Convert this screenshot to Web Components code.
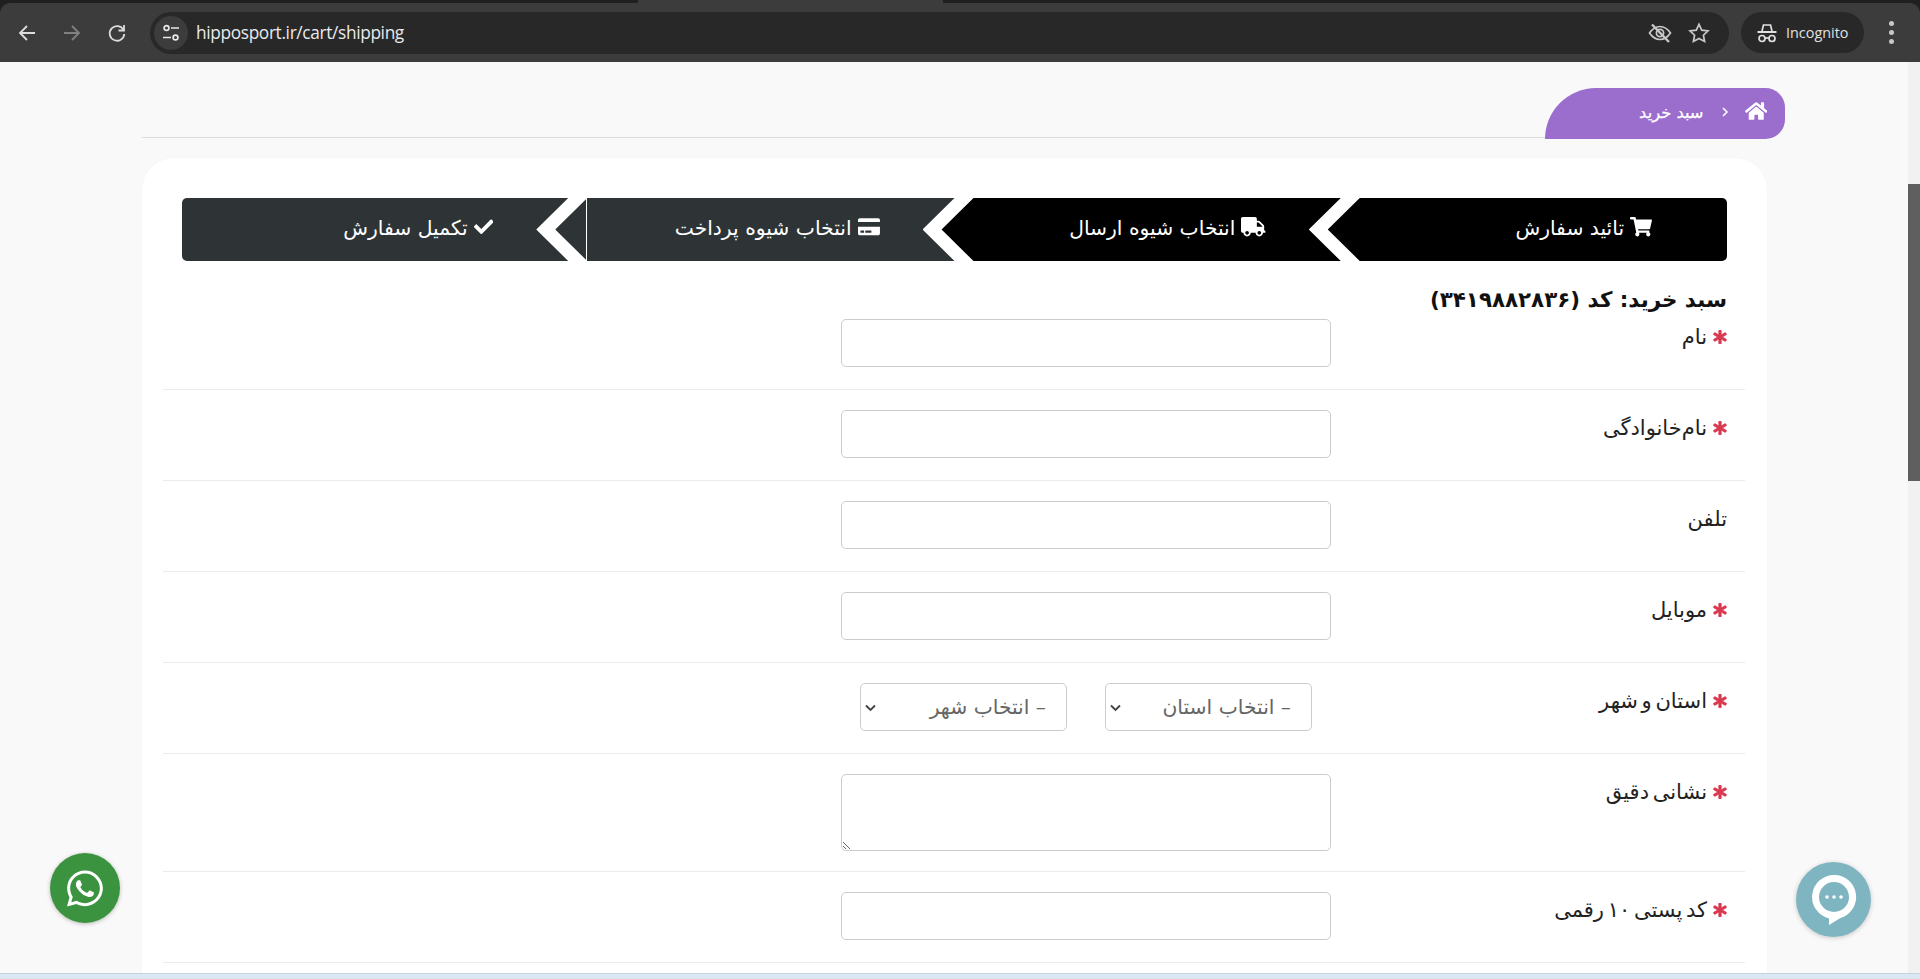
<!DOCTYPE html>
<html lang="fa" dir="rtl">
<head>
<meta charset="utf-8">
<title>hipposport.ir/cart/shipping</title>
<style>
  html, body { margin: 0; height: 979px; overflow: hidden; background: #f9f9f9; }
  body { font-family: "DejaVu Sans", "Noto Sans", sans-serif; color: #111; display: flex; flex-direction: column; }
</style>
</head>
<body>
  <browser-bar url="hipposport.ir/cart/shipping"></browser-bar>
  <page-area>
    <crumb-line>سبد خرید</crumb-line>
    <form-card>
      <check-steps>
        <step-item icon="cart">تائید سفارش</step-item>
        <step-item icon="truck">انتخاب شیوه ارسال</step-item>
        <step-item icon="card" state="todo" line>انتخاب شیوه پرداخت</step-item>
        <step-item icon="check" state="todo" last>تکمیل سفارش</step-item>
      </check-steps>
      <order-title>سبد خرید: کد (۳۴۱۹۸۸۲۸۳۶)</order-title>
      <form-row required first>نام<text-field slot="field"></text-field></form-row>
      <form-row required>نام‌خانوادگی<text-field slot="field"></text-field></form-row>
      <form-row>تلفن<text-field slot="field"></text-field></form-row>
      <form-row required>موبایل<text-field slot="field"></text-field></form-row>
      <form-row required>استان و شهر
        <pick-pair slot="field" first="– انتخاب استان" second="– انتخاب شهر"></pick-pair>
      </form-row>
      <form-row required>نشانی دقیق<area-field slot="field"></area-field></form-row>
      <form-row required>کد پستی ۱۰ رقمی<text-field slot="field"></text-field></form-row>
      <form-row></form-row>
    </form-card>
    <float-button kind="whatsapp"></float-button>
    <float-button kind="chat"></float-button>
  </page-area>
  <task-strip></task-strip>

<script>
// font awesome style glyphs, all solid fill
const ICONS = {
  cart: ['0 0 576 512', 'M528.12 301.319l47.273-208C578.806 78.301 567.391 64 551.99 64H159.208l-9.166-44.81C147.758 8.021 137.93 0 126.529 0H24C10.745 0 0 10.745 0 24v16c0 13.255 10.745 24 24 24h69.883l70.248 343.435C147.325 417.1 136 435.222 136 456c0 30.928 25.072 56 56 56s56-25.072 56-56c0-15.674-6.447-29.835-16.824-40h209.647C430.447 426.165 424 440.326 424 456c0 30.928 25.072 56 56 56s56-25.072 56-56c0-22.172-12.888-41.332-31.579-50.405l5.517-24.276c3.413-15.018-8.002-29.319-23.403-29.319H218.117l-6.545-32h293.145c11.206 0 20.92-7.754 23.403-18.681z'],
  truck: ['0 0 640 512', 'M624 352h-16V243.9c0-12.7-5.1-24.9-14.1-33.9L494 110.1c-9-9-21.2-14.1-33.9-14.1H416V48c0-26.5-21.5-48-48-48H48C21.5 0 0 21.5 0 48v320c0 26.5 21.5 48 48 48h16c0 53 43 96 96 96s96-43 96-96h128c0 53 43 96 96 96s96-43 96-96h48c8.8 0 16-7.2 16-16v-32c0-8.8-7.2-16-16-16zM160 464c-26.5 0-48-21.5-48-48s21.5-48 48-48 48 21.5 48 48-21.5 48-48 48zm320 0c-26.5 0-48-21.5-48-48s21.5-48 48-48 48 21.5 48 48-21.5 48-48 48zm80-208H416V144h44.1l99.9 99.9V256z'],
  card: ['0 0 576 512', 'M0 432c0 26.5 21.5 48 48 48h480c26.5 0 48-21.5 48-48V256H0v176zm192-68c0-6.6 5.4-12 12-12h136c6.6 0 12 5.4 12 12v40c0 6.6-5.4 12-12 12H204c-6.6 0-12-5.4-12-12v-40zm-128 0c0-6.6 5.4-12 12-12h72c6.6 0 12 5.4 12 12v40c0 6.6-5.4 12-12 12H76c-6.6 0-12-5.4-12-12v-40zM576 80v48H0V80c0-26.5 21.5-48 48-48h480c26.5 0 48 21.5 48 48z'],
  check: ['0 0 512 512', 'M173.898 439.404l-166.4-166.4c-9.997-9.997-9.997-26.206 0-36.204l36.203-36.204c9.997-9.998 26.207-9.998 36.204 0L192 312.69 432.095 72.596c9.997-9.997 26.207-9.997 36.204 0l36.203 36.204c9.997 9.997 9.997 26.206 0 36.204l-294.4 294.401c-9.998 9.997-26.207 9.997-36.204-.001z'],
  home: ['0 0 576 512', 'M280.37 148.26L96 300.11V464a16 16 0 0 0 16 16l112.06-.29a16 16 0 0 0 15.92-16V368a16 16 0 0 1 16-16h64a16 16 0 0 1 16 16v95.64a16 16 0 0 0 16 16.05L464 480a16 16 0 0 0 16-16V300L295.67 148.26a12.19 12.19 0 0 0-15.3 0zM571.6 251.47L488 182.56V44.05a12 12 0 0 0-12-12h-56a12 12 0 0 0-12 12v72.61L318.47 43a48 48 0 0 0-61 0L4.34 251.47a12 12 0 0 0-1.6 16.9l25.5 31A12 12 0 0 0 45.15 301l235.22-193.74a12.19 12.19 0 0 1 15.3 0L530.9 301a12 12 0 0 0 16.9-1.6l25.5-31a12 12 0 0 0-1.7-16.93z'],
  star: ['0 0 512 512', 'M478.21 334.093L336 256l142.21-78.093c11.795-6.477 15.961-21.384 9.232-33.037l-19.48-33.741c-6.728-11.653-21.72-15.499-33.227-8.523L296 186.718l3.475-162.204C299.763 11.061 288.937 0 275.48 0h-38.96c-13.456 0-24.283 11.061-23.994 24.514L216 186.718 77.265 102.607c-11.506-6.976-26.499-3.13-33.227 8.523l-19.48 33.741c-6.728 11.653-2.562 26.56 9.233 33.037L176 256 33.79 334.093c-11.795 6.477-15.961 21.384-9.232 33.037l19.48 33.741c6.728 11.653 21.721 15.499 33.227 8.523L216 325.282l-3.475 162.204C212.237 500.939 223.064 512 236.52 512h38.961c13.456 0 24.283-11.061 23.995-24.514L296 325.282l138.735 84.111c11.506 6.976 26.499 3.13 33.227-8.523l19.48-33.741c6.728-11.653 2.563-26.559-9.232-33.036z'],
  whatsapp: ['0 0 448 512', 'M380.9 97.1C339 55.1 283.2 32 223.9 32c-122.4 0-222 99.6-222 222 0 39.1 10.2 77.3 29.6 111L0 480l117.7-30.9c32.4 17.7 68.9 27 106.1 27h.1c122.3 0 224.1-99.6 224.1-222 0-59.3-25.2-115-67.1-157zm-157 341.6c-33.2 0-65.7-8.9-94-25.7l-6.7-4-69.8 18.3L72 359.2l-4.4-7c-18.5-29.4-28.2-63.3-28.2-98.2 0-101.7 82.8-184.5 184.6-184.5 49.3 0 95.6 19.2 130.4 54.1 34.8 34.9 56.2 81.2 56.1 130.5 0 101.8-84.9 184.6-186.6 184.6zm101.2-138.2c-5.5-2.8-32.8-16.2-37.9-18-5.1-1.9-8.8-2.8-12.5 2.8-3.7 5.6-14.3 18-17.6 21.8-3.2 3.7-6.5 4.2-12 1.4-32.6-16.3-54-29.1-75.5-66-5.7-9.8 5.7-9.1 16.3-30.3 1.8-3.7.9-6.9-.5-9.7-1.4-2.8-12.5-30.1-17.1-41.2-4.5-10.8-9.1-9.3-12.5-9.5-3.2-.2-6.9-.2-10.6-.2-3.7 0-9.7 1.4-14.8 6.9-5.1 5.6-19.4 19-19.4 46.3 0 27.3 19.9 53.7 22.6 57.4 2.8 3.7 39.1 59.7 94.8 83.8 35.2 15.2 49 16.5 66.6 13.9 10.7-1.6 32.8-13.4 37.4-26.4 4.6-13 4.6-24.1 3.2-26.4-1.3-2.5-5-3.9-10.5-6.6z']
};

function glyph(name, height) {
  const [box, d] = ICONS[name];
  return `<svg viewBox="${box}" height="${height}" fill="currentColor" aria-hidden="true"><path d="${d}"/></svg>`;
}

function shadow(el, html) {
  el.attachShadow({mode: 'open'}).innerHTML = html;
}

class BrowserBar extends HTMLElement {
  constructor() {
    super();
    shadow(this, `
      <style>
        :host { display: block; flex: none; height: 62px; background: #202020; direction: ltr; }
        .tabs { height: 3px; padding-left: 638px; }
        .tab { width: 305px; height: 3px; background: #3c3c3c; }
        .bar { height: 59px; background: #3c3c3c; border-radius: 10px 10px 0 0; display: flex; align-items: center; color: #dcdcdc; }
        .nav { width: 150px; flex: none; display: flex; padding-left: 15px; gap: 21px; box-sizing: border-box; }
        .nav svg { width: 24px; height: 24px; display: block; fill: none; stroke: currentColor; stroke-width: 1.8; }
        .nav .off { color: #808080; }
        .url { width: 1579px; height: 42px; flex: none; background: #282828; border-radius: 21px; display: flex; align-items: center; padding: 0 18px 0 4px; box-sizing: border-box; }
        .tune { width: 34px; height: 34px; border-radius: 50%; background: #3c3c3c; display: grid; place-items: center; flex: none; }
        .text { flex: 1; margin-left: 8px; font: 17.3px "Open Sans", "Noto Sans", sans-serif; color: #e8eaed; letter-spacing: -.35px; }
        .url svg.tool { display: block; fill: none; stroke: #c8c8c8; stroke-width: 1.7; }
        .tools { display: flex; align-items: center; gap: 15px; }
        .who { width: 123px; height: 41px; margin-left: 12px; flex: none; background: #282828; border-radius: 21px; display: flex; align-items: center; padding-left: 15px; box-sizing: border-box; gap: 8px; font: 14.4px "Open Sans", "Noto Sans", sans-serif; color: #e0e0e0; }
        .dots { margin-left: 25px; width: 5px; display: flex; flex-direction: column; gap: 4px; }
        .dots i { width: 5px; height: 5px; border-radius: 50%; background: #c8c8c8; }
      </style>
      <div class="tabs"><div class="tab"></div></div>
      <div class="bar">
        <div class="nav">
          <svg viewBox="0 0 24 24"><path d="M20 12H5M12 5l-7 7 7 7"/></svg>
          <svg class="off" viewBox="0 0 24 24"><path d="M4 12h15M12 5l7 7-7 7"/></svg>
          <svg viewBox="0 0 24 24"><path d="M18.500 9A7.300 7.300 0 1 0 19.300 13"/><path d="M19 4v5.500h-5.500"/></svg>
        </div>
        <div class="url">
          <div class="tune">
            <svg width="20" height="20" viewBox="0 0 20 20" fill="none" stroke="#e8e8e8" stroke-width="1.700"><circle cx="5.500" cy="5" r="2.400"/><path d="M10 5h8M2 14.500h8"/><circle cx="14.500" cy="14.500" r="2.400"/></svg>
          </div>
          <span class="text" id="u"></span>
          <div class="tools">
            <svg class="tool" width="24" height="24" viewBox="0 0 24 24"><path d="M1.500 12C5 7 8.500 5.500 12 5.500S19 7 22.500 12C19 17 15.500 18.500 12 18.500S5 17 1.500 12z"/><circle cx="12" cy="12" r="3.600"/><path d="M4 3.500L21 21" stroke-width="2.400"/></svg>
            <svg class="tool" width="24" height="24" viewBox="0 0 24 24"><path d="M12 3.300l2.700 5.800 6.300.8-4.600 4.300 1.200 6.300-5.600-3.100-5.600 3.100 1.200-6.300L3 9.900l6.300-.8z"/></svg>
          </div>
        </div>
        <div class="who">
          <svg width="22" height="22" viewBox="0 0 22 22" fill="none" stroke="#e0e0e0" stroke-width="1.700"><path d="M6 9l1.500-6h7L16 9"/><path d="M1.500 10h19" stroke-width="2"/><circle cx="6" cy="16.500" r="3"/><circle cx="16" cy="16.500" r="3"/><path d="M9 16h4"/></svg>
          <span>Incognito</span>
        </div>
        <div class="dots"><i></i><i></i><i></i></div>
      </div>
    `);
  }
  connectedCallback() {
    this.shadowRoot.getElementById('u').textContent = this.getAttribute('url');
  }
}
customElements.define('browser-bar', BrowserBar);

class PageArea extends HTMLElement {
  constructor() {
    super();
    shadow(this, `
      <style>
        :host { display: flex; flex: 1; min-height: 0; overflow: hidden; direction: ltr; position: relative; }
        .scroll { flex: 1; min-width: 0; height: 100%; overflow: hidden; padding-top: 26px; box-sizing: border-box; }
        .track { width: 12px; flex: none; background: #f1f1f1; }
        .thumb { height: 297px; margin-top: 122px; background: #5f5f5f; }
      </style>
      <div class="scroll"><slot></slot></div>
      <div class="track"><div class="thumb"></div></div>
    `);
  }
}
customElements.define('page-area', PageArea);

class CrumbLine extends HTMLElement {
  constructor() {
    super();
    shadow(this, `
      <style>
        :host { display: flex; width: 1643px; margin: 0 0 19px 142px; direction: ltr; }
        .rule { flex: 1; height: 1px; background: #dcdcdc; align-self: flex-end; margin-bottom: 1px; }
        .crumb { width: 240px; height: 51px; background: #9b6dcd; color: #fff; border-radius: 52px 20px 20px 0; direction: rtl; display: flex; align-items: center; padding-right: 18px; box-sizing: border-box; font-size: 16.300px; }
        .home { margin-top: -6px; display: block; }
        .home svg { display: block; }
        .sep { margin: -4px 16px 0 17px; }
        .sep svg { display: block; }
        .name { margin-top: -3px; -webkit-text-stroke: .25px #fff; }
      </style>
      <div class="rule"></div>
      <div class="crumb">
        <span class="home">${glyph('home', 20)}</span>
        <span class="sep"><svg width="8" height="10" viewBox="0 0 8 10" fill="none" stroke="#fff" stroke-width="1.600"><path d="M2 1l4 4-4 4"/></svg></span>
        <span class="name"><slot></slot></span>
      </div>
    `);
  }
}
customElements.define('crumb-line', CrumbLine);

class FormCard extends HTMLElement {
  constructor() {
    super();
    shadow(this, `
      <style>
        :host { display: block; width: 1625px; margin-left: 142px; direction: rtl; background: #fff; border-radius: 32px 32px 0 0; padding: 40px 22px 0 21px; box-sizing: border-box; box-shadow: 0 0 2px rgba(0,0,0,.04); }
      </style>
      <slot></slot>
    `);
  }
}
customElements.define('form-card', FormCard);

class CheckSteps extends HTMLElement {
  constructor() {
    super();
    shadow(this, `
      <style>
        :host { display: grid; grid-template-columns: repeat(4, 1fr); height: 63px; margin: 0 18px 0 19px; border-radius: 5px; overflow: hidden; }
      </style>
      <slot></slot>
    `);
  }
}
customElements.define('check-steps', CheckSteps);

class StepItem extends HTMLElement {
  constructor() {
    super();
    shadow(this, `
      <style>
        :host { --c: #000; display: flex; align-items: center; gap: 6px; background: var(--c); color: #fff; padding-right: 75px; position: relative; font-size: 20.300px; }
        :host([state=todo]) { --c: #2e3436; }
        .ico { display: block; margin-top: -5px; }
        .ico svg { display: block; }
        .txt { margin-top: -3px; }
        .arrow, .fill { position: absolute; top: 0; left: -32px; width: 51px; height: 100%; }
        .arrow { background: #fff; clip-path: polygon(32px 0, 51px 0, 19px 50%, 51px 100%, 32px 100%, 0 50%); z-index: 1; }
        .fill { background: var(--c); clip-path: polygon(51px 0, 19px 50%, 51px 100%); z-index: 1; }
        :host([last]) .arrow, :host([last]) .fill { display: none; }
        .line { display: none; position: absolute; top: 0; bottom: 0; left: 18px; width: 1px; background: #fff; z-index: 2; }
        :host([line]) .line { display: block; }
      </style>
      <span class="ico" id="i"></span>
      <span class="txt"><slot></slot></span>
      <i class="fill"></i>
      <i class="arrow"></i>
      <i class="line"></i>
    `);
  }
  connectedCallback() {
    this.shadowRoot.getElementById('i').innerHTML = glyph(this.getAttribute('icon'), 19.5);
  }
}
customElements.define('step-item', StepItem);

class OrderTitle extends HTMLElement {
  constructor() {
    super();
    shadow(this, `
      <style>
        :host { display: block; height: 38px; margin: 20px 18px 0 19px; font-size: 21.400px; font-weight: 700; line-height: 38px; color: #111; }
      </style>
      <slot></slot>
    `);
  }
}
customElements.define('order-title', OrderTitle);

class FormRow extends HTMLElement {
  constructor() {
    super();
    shadow(this, `
      <style>
        :host { display: grid; grid-template-columns: 396px 490px 1fr; padding: 20px 18px 22px 0; box-sizing: border-box; border-bottom: 1px solid #ebebeb; }
        :host([first]) { padding-top: 0; }
        .label { display: flex; align-items: flex-start; gap: 6px; font-size: 21px; line-height: 36px; word-spacing: -3px; color: #222; }
        .star { display: none; color: #d9384f; margin-top: 11px; }
        .star svg { display: block; stroke: currentColor; stroke-width: 30; }
        :host([required]) .star { display: block; }
        .field { display: block; min-height: 48px; }
      </style>
      <div class="label"><span class="star">${glyph('star', 14)}</span><span><slot></slot></span></div>
      <div class="field"><slot name="field"></slot></div>
    `);
  }
}
customElements.define('form-row', FormRow);

const BOX_CSS = `border: 1px solid #ccc; border-radius: 5px; background: #fff; box-sizing: border-box; font: 20.300px "DejaVu Sans", "Noto Sans", sans-serif; color: #666; outline: none;`;

class TextField extends HTMLElement {
  constructor() {
    super();
    shadow(this, `
      <style>
        :host { display: block; }
        input { display: block; width: 490px; height: 48px; padding: 0 12px; ${BOX_CSS} }
      </style>
      <input type="text">
    `);
  }
}
customElements.define('text-field', TextField);

class AreaField extends HTMLElement {
  constructor() {
    super();
    shadow(this, `
      <style>
        :host { display: block; margin-bottom: -2px; }
        textarea { display: block; width: 490px; height: 77px; margin: 0; padding: 6px 12px; ${BOX_CSS} }
      </style>
      <textarea dir="rtl"></textarea>
    `);
  }
}
customElements.define('area-field', AreaField);

class PickPair extends HTMLElement {
  constructor() {
    super();
    shadow(this, `
      <style>
        :host { display: flex; gap: 38px; padding-right: 19px; }
        .pick { position: relative; display: block; width: 207px; height: 48px; }
        select { appearance: none; display: block; width: 100%; height: 100%; padding: 0 20px 0 20px; ${BOX_CSS} }
        svg { position: absolute; left: 5px; top: 21px; pointer-events: none; }
      </style>
      <span class="pick"><select><option id="a"></option></select>${PickPair.arrow}</span>
      <span class="pick"><select><option id="b"></option></select>${PickPair.arrow}</span>
    `);
  }
  static get arrow() {
    return `<svg width="11" height="8" viewBox="0 0 11 8" fill="none" stroke="#444" stroke-width="1.900"><path d="M1 1.500l4.500 4.500L10 1.500"/></svg>`;
  }
  connectedCallback() {
    this.shadowRoot.getElementById('a').textContent = this.getAttribute('first');
    this.shadowRoot.getElementById('b').textContent = this.getAttribute('second');
  }
}
customElements.define('pick-pair', PickPair);

class FloatButton extends HTMLElement {
  constructor() {
    super();
    shadow(this, `
      <style>
        :host { position: fixed; z-index: 5; display: grid; place-items: center; border-radius: 50%; color: #fff; }
        :host([kind=whatsapp]) { left: 50px; top: 853px; width: 70px; height: 70px; background: #3b923f; box-shadow: 0 1px 4px rgba(0,0,0,.25); }
        :host([kind=chat]) { left: 1796px; top: 862px; width: 75px; height: 75px; background: #7fb5c1; box-shadow: 0 1px 5px rgba(0,0,0,.2); }
        svg { display: block; }
      </style>
      <span id="i"></span>
    `);
  }
  connectedCallback() {
    const i = this.shadowRoot.getElementById('i');
    if (this.getAttribute('kind') === 'whatsapp') {
      i.innerHTML = glyph('whatsapp', 41);
    } else {
      i.innerHTML = `<svg width="48" height="54" viewBox="0 0 48 54">
        <path fill="#fff" fill-rule="evenodd" d="M24 2a22 22 0 0 1 6 43.200L19 52V45.400A22 22 0 0 1 24 2zm0 7a15 15 0 1 0 0 30 15 15 0 0 0 0-30z"/>
        <circle cx="17" cy="24" r="1.800" fill="#fff"/><circle cx="24" cy="24" r="1.800" fill="#fff"/><circle cx="31" cy="24" r="1.800" fill="#fff"/>
      </svg>`;
    }
  }
}
customElements.define('float-button', FloatButton);

class TaskStrip extends HTMLElement {
  constructor() {
    super();
    shadow(this, `<style>:host { display: block; flex: none; height: 6px; background: #dbe8f4; border-top: 1px solid #c3d3e2; box-sizing: border-box; position: relative; z-index: 6; }</style>`);
  }
}
customElements.define('task-strip', TaskStrip);
</script>
</body>
</html>
